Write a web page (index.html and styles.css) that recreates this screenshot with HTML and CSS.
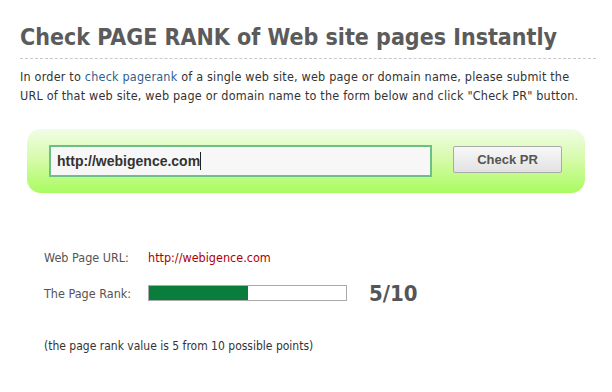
FILE: index.html
```html
<!DOCTYPE html>
<html lang="en">
<head>
    <meta charset="UTF-8">
    <title>Check PAGE RANK</title>
    <link rel="stylesheet" href="styles.css">
</head>
<body>

    <!-- Heading and intro -->
    <div class="page">
        <h1 class="title">Check PAGE RANK of Web site pages Instantly</h1>
        <p class="intro">In order to <a href="#">check pagerank</a> of a single web site, web page or domain name, please submit the<br>URL of that web site, web page or domain name to the form below and click "Check PR" button.</p>

        <!-- Check form -->
        <form class="check-box">
            <div class="url-field">http://webigence.com<span class="caret"></span></div>
            <button type="button" class="check-btn">Check PR</button>
        </form>

        <!-- Results -->
        <div class="results">
            <div class="row">
                <span class="label">Web Page URL:</span>
                <span class="url-value">http://webigence.com</span>
            </div>
            <div class="row">
                <span class="label">The Page Rank:</span>
                <div class="bar"><div class="bar-fill" style="width: 50%;"></div></div>
                <span class="score">5/10</span>
            </div>
            <p class="note">(the page rank value is 5 from 10 possible points)</p>
        </div>
    </div>

</body>
</html>
```

FILE: styles.css
```css
body {
    margin: 0;
    background-color: #fff;
    font-family: "DejaVu Sans Condensed", "DejaVu Sans", sans-serif;
    color: #333;
}

.page {
    padding: 20px 16px 0 20px;
}

.title {
    margin: 0;
    font-size: 23px;
    font-weight: bold;
    color: #5b5b5b;
    line-height: 34px;
    padding-bottom: 4px;
    border-bottom: 1px dashed #c8c8c8;
}

.intro {
    margin: 8px 0 0 0;
    font-size: 12.5px;
    line-height: 19px;
    letter-spacing: 0.2px;
    color: #333;
    white-space: nowrap;
}

.intro a {
    color: #2f5f8f;
    text-decoration: none;
}

/* Green form box */
.check-box {
    margin: 24px 11px 0 7px;
    height: 64px;
    border-radius: 14px;
    background: linear-gradient(to bottom, #f2fde6 0%, #d4fba6 50%, #a9fb60 100%);
    display: flex;
    align-items: center;
    padding: 0 23px 0 22px;
    box-sizing: border-box;
}

.url-field {
    width: 383px;
    height: 32px;
    box-sizing: border-box;
    border: 2px solid #6cbf86;
    background-color: #f7f7f7;
    font-family: "Liberation Sans", Arial, sans-serif;
    font-size: 14px;
    font-weight: bold;
    color: #333;
    line-height: 28px;
    padding-left: 6px;
    display: flex;
    align-items: center;
}

.caret {
    display: inline-block;
    width: 1px;
    height: 18px;
    background-color: #222;
}

.check-btn {
    margin-left: auto;
    width: 109px;
    height: 27px;
    border: 1px solid #aaa;
    border-radius: 2px;
    background: linear-gradient(to bottom, #f8f8f8, #e2e2e2);
    font-family: "Liberation Sans", Arial, sans-serif;
    font-size: 13px;
    font-weight: bold;
    color: #555;
    margin-top: -4px;
}

/* Results block */
.results {
    margin-top: 46px;
    padding-left: 24px;
    font-size: 12.5px;
}

.row {
    display: flex;
    align-items: center;
    height: 36px;
}

.label {
    width: 104px;
    color: #555;
}

.url-value {
    color: #b00000;
}

.bar {
    width: 199px;
    height: 16px;
    box-sizing: border-box;
    border: 1px solid #aaa;
    background-color: #fff;
}

.bar-fill {
    height: 100%;
    background-color: #0a7d3c;
}

.score {
    margin-left: 22px;
    font-size: 22px;
    font-weight: bold;
    color: #555;
}

.note {
    margin: 28px 0 0 0;
    font-size: 12px;
    color: #333;
}
```
